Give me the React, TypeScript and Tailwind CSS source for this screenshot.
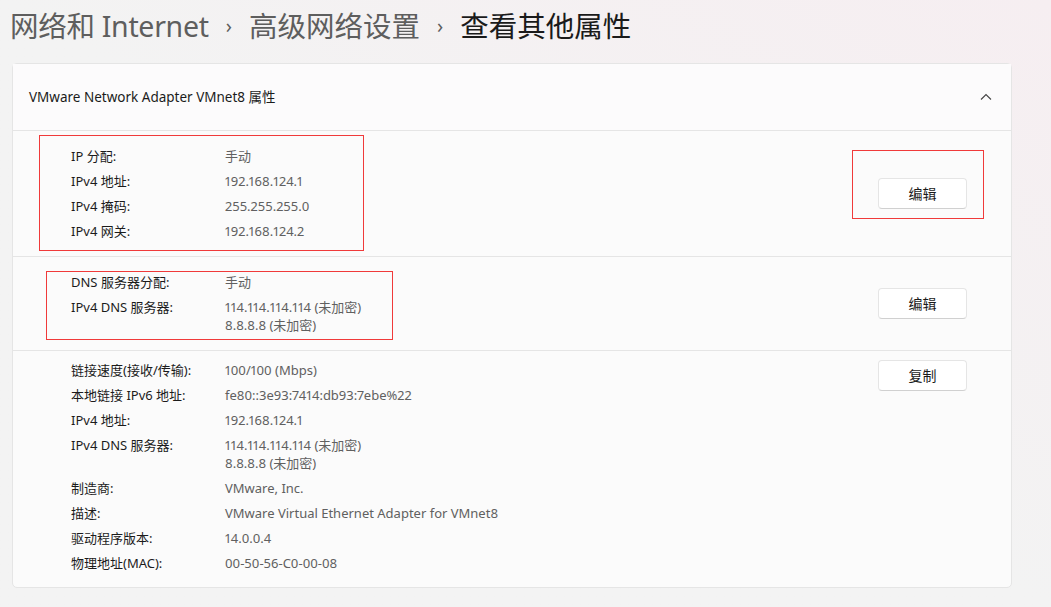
const font = { fontFamily: '"Noto Sans", "Noto Sans CJK SC", sans-serif' };

interface Row {
  label: string;
  value: string[];
}

const ipRows: Row[] = [
  { label: 'IP 分配:', value: ['手动'] },
  { label: 'IPv4 地址:', value: ['192.168.124.1'] },
  { label: 'IPv4 掩码:', value: ['255.255.255.0'] },
  { label: 'IPv4 网关:', value: ['192.168.124.2'] },
];

const dnsRows: Row[] = [
  { label: 'DNS 服务器分配:', value: ['手动'] },
  { label: 'IPv4 DNS 服务器:', value: ['114.114.114.114 (未加密)', '8.8.8.8 (未加密)'] },
];

const infoRows: Row[] = [
  { label: '链接速度(接收/传输):', value: ['100/100 (Mbps)'] },
  { label: '本地链接 IPv6 地址:', value: ['fe80::3e93:7414:db93:7ebe%22'] },
  { label: 'IPv4 地址:', value: ['192.168.124.1'] },
  { label: 'IPv4 DNS 服务器:', value: ['114.114.114.114 (未加密)', '8.8.8.8 (未加密)'] },
  { label: '制造商:', value: ['VMware, Inc.'] },
  { label: '描述:', value: ['VMware Virtual Ethernet Adapter for VMnet8'] },
  { label: '驱动程序版本:', value: ['14.0.0.4'] },
  { label: '物理地址(MAC):', value: ['00-50-56-C0-00-08'] },
];

const Rows = ({ rows }: { rows: Row[] }) => (
  <div className="flex flex-col pl-[58px]">
    {rows.map((r) => (
      <div key={r.label} className="flex py-[3.5px] text-[13px] leading-[18px]">
        <div className="w-[154px] text-[#1b1b1b]">{r.label}</div>
        <div className="text-[#606060] proportional-nums">
          {r.value.map((v) => (
            <div key={v}>{v}</div>
          ))}
        </div>
      </div>
    ))}
  </div>
);

const Btn = ({ children }: { children: string }) => (
  <button className="w-[89px] h-[31px] rounded-[4px] bg-white border border-[#e5e5e5] border-b-[#d0d0d0] text-[14px] text-[#1b1b1b]">
    {children}
  </button>
);

export default function App() {
  return (
    <div
      style={font}
      className="w-[1051px] h-[607px] overflow-hidden bg-linear-to-bl from-[#f6eef1] via-[#f3f3f3] to-[#f3f3f3]"
    >
      <div className="flex items-center h-[52px] pl-[10px] text-[28.5px] text-[#5e5e5e]">
        <span className="tracking-[-0.3px]">网络和 Internet</span>
        <span className="mx-[17px] text-[20px] text-[#5e5e5e]">›</span>
        <span>高级网络设置</span>
        <span className="mx-[17px] text-[20px] text-[#5e5e5e]">›</span>
        <span className="text-[#1a1a1a]">查看其他属性</span>
      </div>

      <div className="relative ml-[12px] mt-[11px] w-[1000px] h-[525px] rounded-[5px] border border-[#e5e5e5] bg-[#fbfbfb]">
        <div className="flex items-center justify-between h-[67px] pl-[16px] pr-[19px] border-b border-[#e5e5e5] bg-[#fcfbfc]">
          <span className="text-[13.5px] text-[#1b1b1b]">VMware Network Adapter VMnet8 属性</span>
          <svg width="12" height="8" viewBox="0 0 12 8" fill="none">
            <polyline points="1,6.5 6,1.5 11,6.5" stroke="#444" strokeWidth="1.1" />
          </svg>
        </div>

        <div className="flex items-center justify-between pt-[12px] pb-[13px] pr-[44px] border-b border-[#e5e5e5]">
          <Rows rows={ipRows} />
          <Btn>编辑</Btn>
        </div>

        <div className="flex items-center justify-between pt-[12px] pb-[13px] pr-[44px] border-b border-[#e5e5e5]">
          <Rows rows={dnsRows} />
          <Btn>编辑</Btn>
        </div>

        <div className="flex items-start justify-between pt-[6px] pr-[44px]">
          <Rows rows={infoRows} />
          <div className="pt-[3px]">
            <Btn>复制</Btn>
          </div>
        </div>

        <div className="absolute left-[26px] top-[71px] w-[325px] h-[116px] border border-[#f03a3a]" />
        <div className="absolute left-[839px] top-[86px] w-[132px] h-[69px] border border-[#f03a3a]" />
        <div className="absolute left-[33px] top-[207px] w-[347px] h-[69px] border border-[#f03a3a]" />
      </div>
    </div>
  );
}
